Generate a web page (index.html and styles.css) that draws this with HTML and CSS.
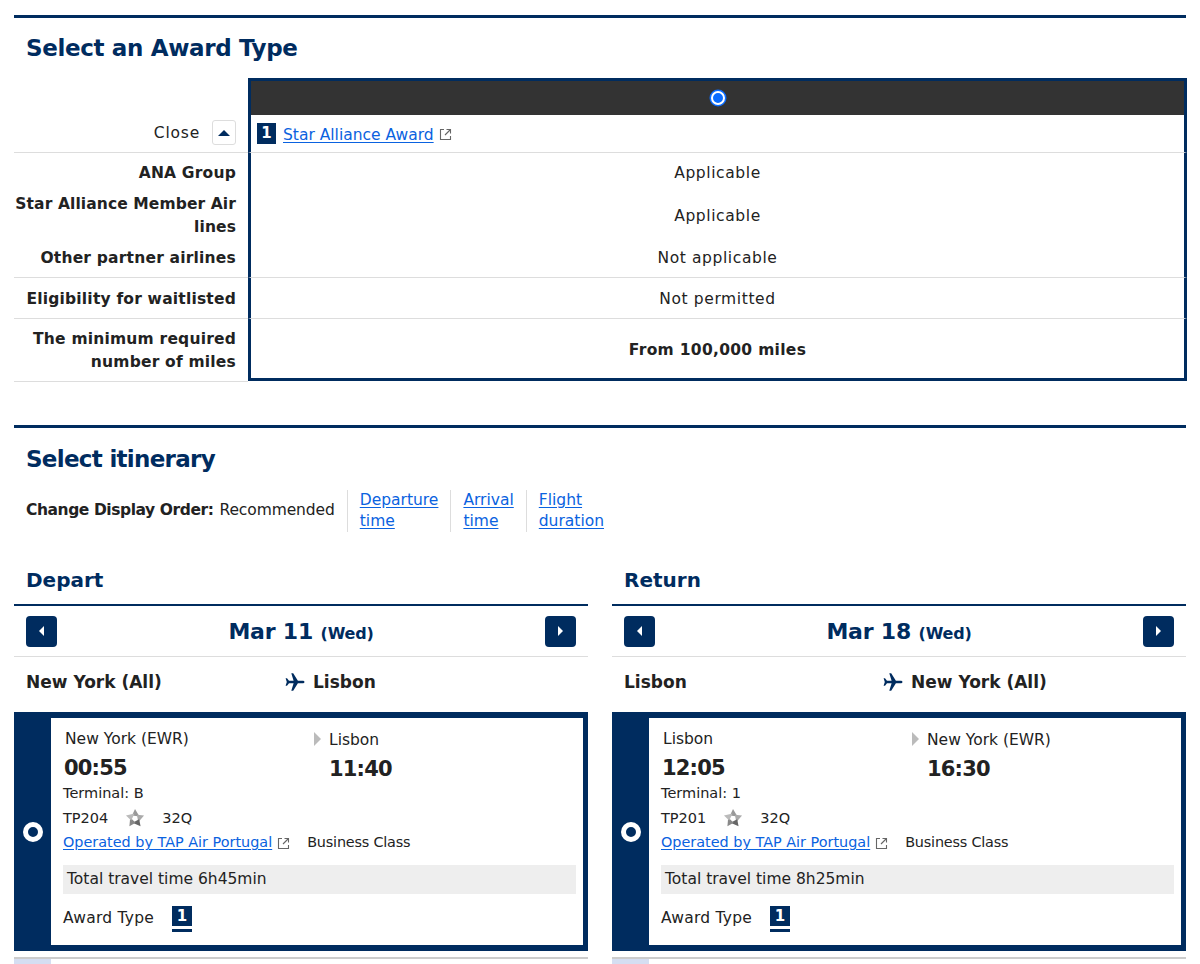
FILE: index.html
```html
<!DOCTYPE html>
<html lang="en">

<head>
    <meta charset="UTF-8">
    <title>Select an Award Type</title>
    <link rel="stylesheet" href="styles.css">
</head>

<body>
    <section class="section award-section">
        <h2 class="section-title">Select an Award Type</h2>
        <div class="award-table">
            <div class="award-row row-head">
                <div class="award-label"></div>
                <div class="award-value value-head"><span class="radio-top"></span></div>
            </div>
            <div class="award-row row-name">
                <div class="award-label label-close">
                    <span class="close-text">Close</span>
                    <span class="close-btn"><span class="tri-up"></span></span>
                </div>
                <div class="award-value value-name">
                    <span class="num-badge">1</span>
                    <a href="#" class="link name-link">Star Alliance Award</a>
                    <svg class="ext-icon" viewBox="0 0 13 13"><path d="M5 1.500H1.500v10h10V8M7.500 1.500h4v4M11.500 1.500L6 7" fill="none" stroke="#666" stroke-width="1.100"/></svg>
                </div>
            </div>
            <div class="award-row row-group">
                <div class="award-label">
                    <div class="sub sub-a">ANA Group</div>
                    <div class="sub sub-b">Star Alliance Member Air<br>lines</div>
                    <div class="sub sub-c">Other partner airlines</div>
                </div>
                <div class="award-value">
                    <div class="sub sub-a">Applicable</div>
                    <div class="sub sub-b">Applicable</div>
                    <div class="sub sub-c">Not applicable</div>
                </div>
            </div>
            <div class="award-row row-wait">
                <div class="award-label">Eligibility for waitlisted</div>
                <div class="award-value">Not permitted</div>
            </div>
            <div class="award-row row-miles">
                <div class="award-label">The minimum required<br>number of miles</div>
                <div class="award-value value-miles">From 100,000 miles</div>
            </div>
        </div>
    </section>

    <section class="section itinerary-section">
        <h2 class="section-title">Select itinerary</h2>
        <div class="sort-row">
            <strong class="sort-label">Change Display Order:</strong>
            <span class="sort-current">Recommended</span>
            <a href="#" class="link sort-link">Departure<br>time</a>
            <a href="#" class="link sort-link">Arrival<br>time</a>
            <a href="#" class="link sort-link">Flight<br>duration</a>
        </div>

        <div class="bounds">
            <div class="bound">
                <h3 class="bound-title">Depart</h3>
                <div class="date-row">
                    <span class="nav-btn"><span class="tri-left"></span></span>
                    <span class="date-text">Mar 11 <small>(Wed)</small></span>
                    <span class="nav-btn"><span class="tri-right"></span></span>
                </div>
                <div class="route-row">
                    <span class="route-from">New York (All)</span>
                    <span class="route-to">
                        <svg class="plane" viewBox="0 0 20 20"><path d="M19.500 10c0-.9-1-1.300-2-1.300h-4.600L8.200 1.200H6.300l2.300 7.500H4L2 6.300H.6L1.800 10 .6 13.700H2L4 11.300h4.600L6.300 18.800h1.900l4.700-7.500h4.600c1 0 2-.4 2-1.300z" fill="#002c5f"/></svg>
                        Lisbon
                    </span>
                </div>
                <div class="flight-card">
                    <div class="card-side"><span class="radio-card"></span></div>
                    <div class="card-body">
                        <div class="times">
                            <div class="time-col">
                                <div class="place">New York (EWR)</div>
                                <div class="time">00:55</div>
                                <div class="terminal">Terminal: B</div>
                            </div>
                            <div class="time-col arrive-col">
                                <div class="place place-arrive"><span class="tri-gray"></span>Lisbon</div>
                                <div class="time">11:40</div>
                            </div>
                        </div>
                        <div class="flight-no">
                            <span>TP204</span>
                            <svg class="star" viewBox="0 0 20 20"><polygon points="10,1 14.500,8.500 7,7.500" fill="#999"/><polygon points="10,1 14.500,8.500 7,7.500" fill="#aaa" transform="rotate(72 10 10.500)"/><polygon points="10,1 14.500,8.500 7,7.500" fill="#666" transform="rotate(144 10 10.500)"/><polygon points="10,1 14.500,8.500 7,7.500" fill="#888" transform="rotate(216 10 10.500)"/><polygon points="10,1 14.500,8.500 7,7.500" fill="#bbb" transform="rotate(288 10 10.500)"/></svg>
                            <span>32Q</span>
                        </div>
                        <div class="operated">
                            <a href="#" class="link">Operated by TAP Air Portugal</a>
                            <svg class="ext-icon" viewBox="0 0 13 13"><path d="M5 1.500H1.500v10h10V8M7.500 1.500h4v4M11.500 1.500L6 7" fill="none" stroke="#666" stroke-width="1.100"/></svg>
                            <span class="cabin">Business Class</span>
                        </div>
                        <div class="total-time">Total travel time 6h45min</div>
                        <div class="award-type">
                            <span>Award Type</span>
                            <span class="type-badge">1</span>
                        </div>
                    </div>
                </div>
                <div class="next-card"><div class="next-side"></div></div>
            </div>

            <div class="bound">
                <h3 class="bound-title">Return</h3>
                <div class="date-row">
                    <span class="nav-btn"><span class="tri-left"></span></span>
                    <span class="date-text">Mar 18 <small>(Wed)</small></span>
                    <span class="nav-btn"><span class="tri-right"></span></span>
                </div>
                <div class="route-row">
                    <span class="route-from">Lisbon</span>
                    <span class="route-to">
                        <svg class="plane" viewBox="0 0 20 20"><path d="M19.500 10c0-.9-1-1.300-2-1.300h-4.600L8.200 1.200H6.300l2.300 7.500H4L2 6.300H.6L1.800 10 .6 13.700H2L4 11.300h4.600L6.300 18.800h1.900l4.700-7.500h4.600c1 0 2-.4 2-1.300z" fill="#002c5f"/></svg>
                        New York (All)
                    </span>
                </div>
                <div class="flight-card">
                    <div class="card-side"><span class="radio-card"></span></div>
                    <div class="card-body">
                        <div class="times">
                            <div class="time-col">
                                <div class="place">Lisbon</div>
                                <div class="time">12:05</div>
                                <div class="terminal">Terminal: 1</div>
                            </div>
                            <div class="time-col arrive-col">
                                <div class="place place-arrive"><span class="tri-gray"></span>New York (EWR)</div>
                                <div class="time">16:30</div>
                            </div>
                        </div>
                        <div class="flight-no">
                            <span>TP201</span>
                            <svg class="star" viewBox="0 0 20 20"><polygon points="10,1 14.500,8.500 7,7.500" fill="#999"/><polygon points="10,1 14.500,8.500 7,7.500" fill="#aaa" transform="rotate(72 10 10.500)"/><polygon points="10,1 14.500,8.500 7,7.500" fill="#666" transform="rotate(144 10 10.500)"/><polygon points="10,1 14.500,8.500 7,7.500" fill="#888" transform="rotate(216 10 10.500)"/><polygon points="10,1 14.500,8.500 7,7.500" fill="#bbb" transform="rotate(288 10 10.500)"/></svg>
                            <span>32Q</span>
                        </div>
                        <div class="operated">
                            <a href="#" class="link">Operated by TAP Air Portugal</a>
                            <svg class="ext-icon" viewBox="0 0 13 13"><path d="M5 1.500H1.500v10h10V8M7.500 1.500h4v4M11.500 1.500L6 7" fill="none" stroke="#666" stroke-width="1.100"/></svg>
                            <span class="cabin">Business Class</span>
                        </div>
                        <div class="total-time">Total travel time 8h25min</div>
                        <div class="award-type">
                            <span>Award Type</span>
                            <span class="type-badge">1</span>
                        </div>
                    </div>
                </div>
                <div class="next-card"><div class="next-side"></div></div>
            </div>
        </div>
    </section>
</body>

</html>
```

FILE: styles.css
```css
html,
body {
    margin: 0;
    padding: 0;
    height: 964px;
    overflow: hidden;
    background: #fff;
    color: #222;
    font-family: "DejaVu Sans", sans-serif;
    font-size: 15.5px;
}

a.link {
    color: #0a62e0;
    text-decoration: underline;
    text-underline-offset: 2px;
}

/* Sections */
.section {
    margin: 0 14px;
    border-top: 3px solid #002c5f;
}

.award-section {
    margin-top: 15px;
}

.itinerary-section {
    margin-top: 43px;
}

.section-title {
    margin: 0;
    padding: 0 12px;
    height: 60px;
    line-height: 60px;
    font-size: 23px;
    letter-spacing: -0.35px;
    color: #002c5f;
}

.itinerary-section .section-title {
    padding-top: 1px;
    letter-spacing: -0.7px;
}

/* Award table */
.award-row {
    display: flex;
    text-align: center;
}

.award-label {
    box-sizing: border-box;
    width: 234px;
    flex: none;
    padding-right: 12px;
    text-align: right;
    font-weight: bold;
    letter-spacing: 0.2px;
    white-space: nowrap;
    border-bottom: 1px solid #ddd;
}

.award-value {
    flex: 1;
    box-sizing: border-box;
    margin-right: -1px;
    letter-spacing: 0.6px;
    border-left: 3px solid #002c5f;
    border-right: 3px solid #002c5f;
    border-bottom: 1px solid #ddd;
}

.row-head {
    height: 37px;
}

.row-head .award-label {
    border-bottom: 0;
}

.value-head {
    border-top: 3px solid #002c5f;
    border-bottom: 0;
    background: #333;
    display: flex;
    align-items: center;
    justify-content: center;
}

.radio-top {
    box-sizing: border-box;
    width: 14px;
    height: 14px;
    border-radius: 50%;
    border: 2px solid #fff;
    background: #0a6cff;
    box-shadow: 0 0 0 1.5px #0a6cff;
}

.row-name {
    height: 38px;
}

.label-close {
    display: flex;
    align-items: center;
    justify-content: flex-end;
    gap: 12px;
    font-weight: normal;
    letter-spacing: 0.8px;
}

.close-text {
    margin-bottom: 2px;
}

.close-btn {
    box-sizing: border-box;
    width: 24px;
    height: 25px;
    margin-bottom: 2px;
    border: 1px solid #ddd;
    border-radius: 3px;
    display: flex;
    align-items: center;
    justify-content: center;
}

.tri-up {
    width: 0;
    height: 0;
    border-left: 6px solid transparent;
    border-right: 6px solid transparent;
    border-bottom: 6px solid #002c5f;
}

.value-name {
    display: flex;
    align-items: center;
    padding-left: 6px;
    text-align: left;
    letter-spacing: 0;
}

.name-link {
    margin-top: 2px;
}

.num-badge {
    width: 19px;
    height: 21px;
    line-height: 21px;
    background: #002c5f;
    color: #fff;
    text-align: center;
    font-size: 15px;
    font-weight: bold;
    margin-right: 7px;
}

.ext-icon {
    width: 13px;
    height: 13px;
    margin-left: 5px;
    margin-top: 2px;
    flex: none;
}

.row-group {
    height: 125px;
}

.sub {
    box-sizing: border-box;
    display: flex;
    align-items: center;
    justify-content: center;
    padding-top: 1px;
    line-height: 23px;
}

.award-label .sub {
    display: block;
}

.award-label .sub-b {
    letter-spacing: 0.1px;
}

.sub-a {
    height: 39px;
    line-height: 39px;
}

.sub-b {
    height: 46px;
}

.award-value .sub-b {
    padding-top: 2px;
}

.sub-c {
    height: 39px;
    line-height: 39px;
}

.row-wait {
    height: 41px;
    line-height: 42px;
}

.row-miles {
    height: 63px;
}

.row-miles .award-label {
    padding-top: 9px;
    line-height: 23px;
}

.value-miles {
    font-weight: bold;
    letter-spacing: 0.3px;
    margin-bottom: 1px;
    padding-top: 3px;
    border-bottom: 3px solid #002c5f;
    display: flex;
    align-items: center;
    justify-content: center;
}

/* Sort row */
.sort-row {
    display: flex;
    align-items: center;
    height: 43px;
    padding-left: 12px;
    line-height: 21px;
}

.sort-label {
    margin-right: 6px;
    letter-spacing: -0.43px;
}

.sort-current {
    margin-right: 12px;
    letter-spacing: -0.1px;
}

.sort-link {
    padding: 0 12px;
    border-left: 1px solid #ddd;
}

/* Depart and return */
.bounds {
    display: flex;
    gap: 24px;
    margin-top: 28px;
}

.bound {
    flex: 1;
    min-width: 0;
}

.bound-title {
    margin: 0;
    padding: 0 12px;
    height: 44px;
    line-height: 40px;
    font-size: 20px;
    color: #002c5f;
    border-bottom: 2px solid #002c5f;
}

.date-row {
    height: 50px;
    display: flex;
    align-items: center;
    justify-content: space-between;
    padding: 0 12px;
    border-bottom: 1px solid #ddd;
}

.date-text {
    margin-top: 1px;
    font-size: 22px;
    font-weight: bold;
    letter-spacing: -0.2px;
    color: #002c5f;
}

.date-text small {
    font-size: 16px;
}

.nav-btn {
    width: 31px;
    height: 31px;
    border-radius: 4px;
    background: #002c5f;
    display: flex;
    align-items: center;
    justify-content: center;
}

.tri-left {
    width: 0;
    height: 0;
    border-top: 5px solid transparent;
    border-bottom: 5px solid transparent;
    border-right: 5px solid #fff;
}

.tri-right {
    width: 0;
    height: 0;
    border-top: 5px solid transparent;
    border-bottom: 5px solid transparent;
    border-left: 5px solid #fff;
}

.route-row {
    display: flex;
    align-items: center;
    height: 47px;
    padding: 1px 12px 0;
    margin-bottom: 7px;
    font-size: 17px;
    font-weight: bold;
}

.route-from {
    width: 259px;
}

.route-to {
    display: flex;
    align-items: center;
    gap: 8px;
}

.plane {
    width: 20px;
    height: 20px;
}

/* Flight card */
.flight-card {
    display: flex;
    height: 239px;
    background: #002c5f;
    padding: 6px 5px 6px 0;
    box-sizing: border-box;
}

.card-side {
    width: 37px;
    flex: none;
    display: flex;
    align-items: center;
    justify-content: center;
}

.radio-card {
    box-sizing: border-box;
    width: 20px;
    height: 20px;
    border-radius: 50%;
    border: 5px solid #fff;
    background: #002c5f;
}

.card-body {
    flex: 1;
    background: #fff;
    padding: 9px 7px 0 12px;
    min-width: 0;
}

.times {
    display: flex;
}

.time-col {
    width: 266px;
}

.arrive-col {
    width: auto;
}

.place {
    height: 24px;
    line-height: 24px;
    padding-left: 2px;
}

.place-arrive {
    display: flex;
    align-items: center;
    margin-left: -17px;
    padding-top: 1px;
}

.tri-gray {
    width: 0;
    height: 0;
    border-top: 7px solid transparent;
    border-bottom: 7px solid transparent;
    border-left: 7px solid #bbb;
    margin-right: 8px;
    margin-top: -2px;
}

.time {
    font-size: 21px;
    font-weight: bold;
    letter-spacing: -0.8px;
    line-height: 34px;
    height: 31px;
    padding-left: 1px;
}

.arrive-col .time {
    padding-left: 0;
}

.terminal {
    line-height: 22px;
    font-size: 14.5px;
}

.flight-no {
    display: flex;
    align-items: center;
    height: 27px;
    font-size: 14.5px;
}

.star {
    width: 20px;
    height: 20px;
    margin: 0 17px;
}

.operated {
    display: flex;
    align-items: center;
    height: 22px;
    font-size: 14.4px;
}

.cabin {
    margin-left: 17px;
    letter-spacing: -0.2px;
}

.total-time {
    margin-top: 12px;
    height: 29px;
    line-height: 29px;
    padding-left: 4px;
    background: #eee;
}

.award-type {
    display: flex;
    align-items: flex-start;
    margin-top: 12px;
    line-height: 24px;
    letter-spacing: 0.25px;
}

.type-badge {
    width: 20px;
    height: 20px;
    line-height: 20px;
    margin-left: 18px;
    background: #002c5f;
    color: #fff;
    text-align: center;
    font-size: 15px;
    font-weight: bold;
    border-bottom: 3px solid #fff;
    box-shadow: 0 3px 0 #002c5f;
}

/* Top of the next flight card, cut off by the window */
.next-card {
    margin-top: 6px;
    border-top: 2px solid #ccc;
    height: 20px;
}

.next-side {
    width: 37px;
    height: 20px;
    background: #d5def2;
}
```
